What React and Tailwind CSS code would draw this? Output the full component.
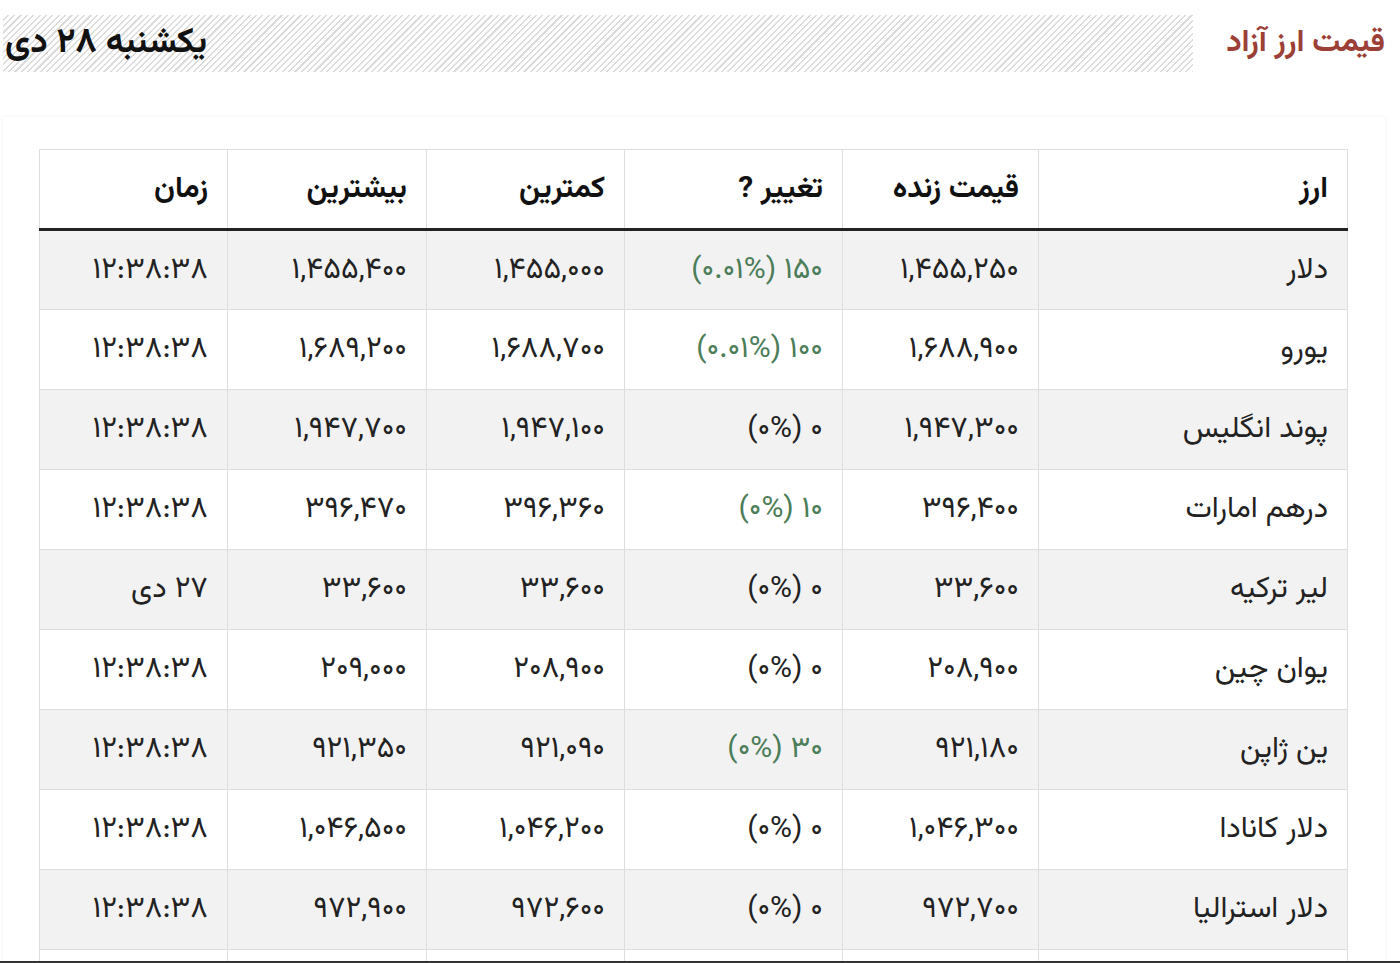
import React from "react";

const rows = [
  ["دلار", "۱,۴۵۵,۲۵۰", "۱۵۰ (۰.۰۱%)", true, "۱,۴۵۵,۰۰۰", "۱,۴۵۵,۴۰۰", "۱۲:۳۸:۳۸"],
  ["یورو", "۱,۶۸۸,۹۰۰", "۱۰۰ (۰.۰۱%)", true, "۱,۶۸۸,۷۰۰", "۱,۶۸۹,۲۰۰", "۱۲:۳۸:۳۸"],
  ["پوند انگلیس", "۱,۹۴۷,۳۰۰", "۰ (۰%)", false, "۱,۹۴۷,۱۰۰", "۱,۹۴۷,۷۰۰", "۱۲:۳۸:۳۸"],
  ["درهم امارات", "۳۹۶,۴۰۰", "۱۰ (۰%)", true, "۳۹۶,۳۶۰", "۳۹۶,۴۷۰", "۱۲:۳۸:۳۸"],
  ["لیر ترکیه", "۳۳,۶۰۰", "۰ (۰%)", false, "۳۳,۶۰۰", "۳۳,۶۰۰", "۲۷ دی"],
  ["یوان چین", "۲۰۸,۹۰۰", "۰ (۰%)", false, "۲۰۸,۹۰۰", "۲۰۹,۰۰۰", "۱۲:۳۸:۳۸"],
  ["ین ژاپن", "۹۲۱,۱۸۰", "۳۰ (۰%)", true, "۹۲۱,۰۹۰", "۹۲۱,۳۵۰", "۱۲:۳۸:۳۸"],
  ["دلار کانادا", "۱,۰۴۶,۳۰۰", "۰ (۰%)", false, "۱,۰۴۶,۲۰۰", "۱,۰۴۶,۵۰۰", "۱۲:۳۸:۳۸"],
  ["دلار استرالیا", "۹۷۲,۷۰۰", "۰ (۰%)", false, "۹۷۲,۶۰۰", "۹۷۲,۹۰۰", "۱۲:۳۸:۳۸"],
  ["", "", "", false, "", "", ""],
];

const widths = ["w-[309px]", "w-[196px]", "w-[218px]", "w-[198px]", "w-[199px]", "w-[188px]"];
const heads = ["ارز", "قیمت زنده", "تغییر ?", "کمترین", "بیشترین", "زمان"];

export default function App() {
  return (
    <div
      dir="rtl"
      className="min-h-screen bg-white text-[#222] font-['Vazirmatn','Noto_Sans_Arabic','DejaVu_Sans',sans-serif] pl-[3px] pr-[15px] pt-[15px]"
    >
      <div className="flex items-center h-[57px]">
        <h1 className="text-[31px] font-bold text-[#9c3f37] pl-[33px] whitespace-nowrap leading-none">
          قیمت ارز آزاد
        </h1>
        <div className="flex-1 h-[57px] flex items-center bg-[repeating-linear-gradient(135deg,#ffffff_0px,#ffffff_3px,#dcdcdc_3px,#dcdcdc_4.5px)]">
          <div className="mr-auto pl-[2px] text-[35px] font-bold text-[#111] leading-none">
            یکشنبه ۲۸ دی
          </div>
        </div>
      </div>

      <div className="mt-[45px] bg-white shadow-[0_0_3px_rgba(0,0,0,0.08)] pt-[32px] pr-[37px] pl-[37px]">
        <table className="border-collapse w-[1308px] table-fixed">
          <thead>
            <tr className="h-[80px]">
              {heads.map((h, i) => (
                <th
                  key={i}
                  className={`${widths[i]} border border-[#dedede] border-b-[3px] border-b-[#222] text-right pr-[19px] font-bold text-[30px] text-[#111]`}
                >
                  {h}
                </th>
              ))}
            </tr>
          </thead>
          <tbody>
            {rows.map((r, ri) => (
              <tr key={ri} className={`h-[80px] ${ri % 2 === 0 ? "bg-[#f2f2f2]" : "bg-white"}`}>
                {[r[0], r[1], r[2], r[4], r[5], r[6]].map((c, ci) => (
                  <td
                    key={ci}
                    className={`border border-[#dedede] text-right pr-[19px] text-[30px] ${
                      ci === 2 && r[3] ? "text-[#4b7d58]" : "text-[#222]"
                    }`}
                  >
                    {c}
                  </td>
                ))}
              </tr>
            ))}
          </tbody>
        </table>
      </div>
      <div className="fixed bottom-0 left-0 right-0 h-[2px] bg-[#333]" />
    </div>
  );
}
